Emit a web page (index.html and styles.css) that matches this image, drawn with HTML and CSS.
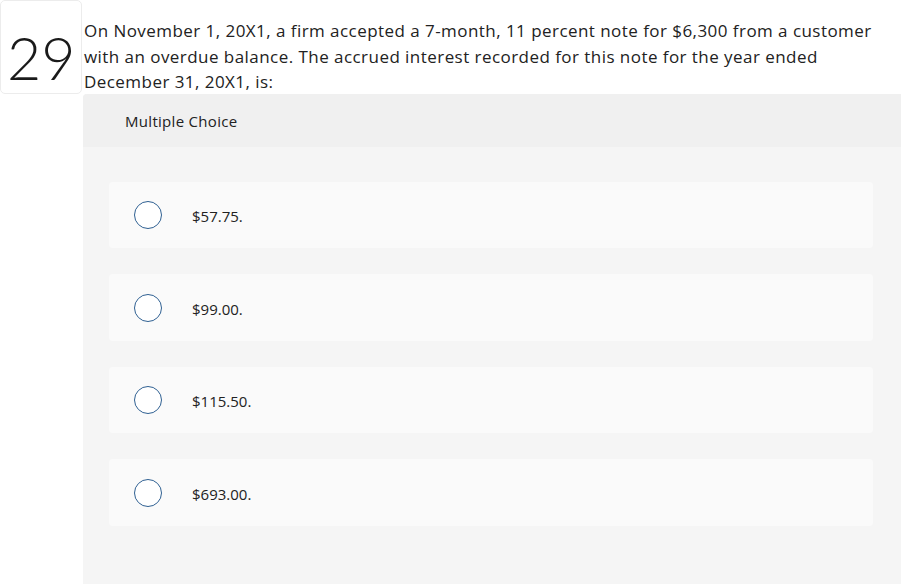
FILE: index.html
```html
<!DOCTYPE html>
<html>
<head>
<meta charset="utf-8">
<link rel="stylesheet" href="styles.css">
</head>
<body>
<div class="question">
  <div class="num">29</div>
  <div class="content">
    <div class="stem">On November 1, 20X1, a firm accepted a 7-month, 11 percent note for $6,300 from a customer with an overdue balance. The accrued interest recorded for this note for the year ended December 31, 20X1, is:</div>
    <div class="panel">
      <div class="panel-head">Multiple Choice</div>
      <div class="options">
        <div class="option"><span class="radio"></span><span class="label">$57.75.</span></div>
        <div class="option"><span class="radio"></span><span class="label">$99.00.</span></div>
        <div class="option"><span class="radio"></span><span class="label">$115.50.</span></div>
        <div class="option"><span class="radio"></span><span class="label">$693.00.</span></div>
      </div>
    </div>
  </div>
</div>
</body>
</html>
```
FILE: styles.css
```css
html, body {
  margin: 0;
  padding: 0;
  background: #fff;
  overflow: hidden;
}
body {
  font-family: "Open Sans", Lato, sans-serif;
  color: #222;
}
.question {
  display: flex;
  align-items: flex-start;
  width: 901px;
  height: 584px;
}
.num {
  box-sizing: border-box;
  flex: 0 0 82px;
  width: 82px;
  height: 94px;
  border: 1px solid #ececec;
  border-radius: 5px;
  font-family: Lato, sans-serif;
  font-weight: 300;
  font-size: 59px;
  line-height: 1;
  padding: 27px 0 0 6px;
  color: #1a1a1a;
}
.content {
  flex: 1;
  margin-left: 1px;
  display: flex;
  flex-direction: column;
}
.stem {
  box-sizing: border-box;
  width: 796px;
  font-size: 17px;
  letter-spacing: 0.45px;
  line-height: 25.5px;
  padding: 18px 0 0 1px;
  height: 94px;
  color: #222;
}
.panel {
  width: 818px;
  height: 500px;
  background: #f5f5f5;
  border-radius: 4px 0 0 4px;
  overflow: hidden;
}
.panel-head {
  box-sizing: border-box;
  height: 53px;
  background: #f0f0f0;
  font-size: 15px;
  letter-spacing: 0.3px;
  padding: 17px 0 0 42px;
  color: #222;
}
.options {
  display: flex;
  flex-direction: column;
  gap: 26.3px;
  padding: 35px 28px 0 26px;
}
.option {
  height: 66.2px;
  background: #fafafa;
  border-radius: 4px;
  display: flex;
  align-items: center;
  padding-left: 25px;
}
.radio {
  box-sizing: border-box;
  width: 28px;
  height: 28px;
  border: 1.5px solid #2f6092;
  border-radius: 50%;
  background: #fff;
  flex: 0 0 28px;
}
.label {
  margin-left: 30px;
  margin-top: 2px;
  font-size: 15px;
  color: #222;
}
```
